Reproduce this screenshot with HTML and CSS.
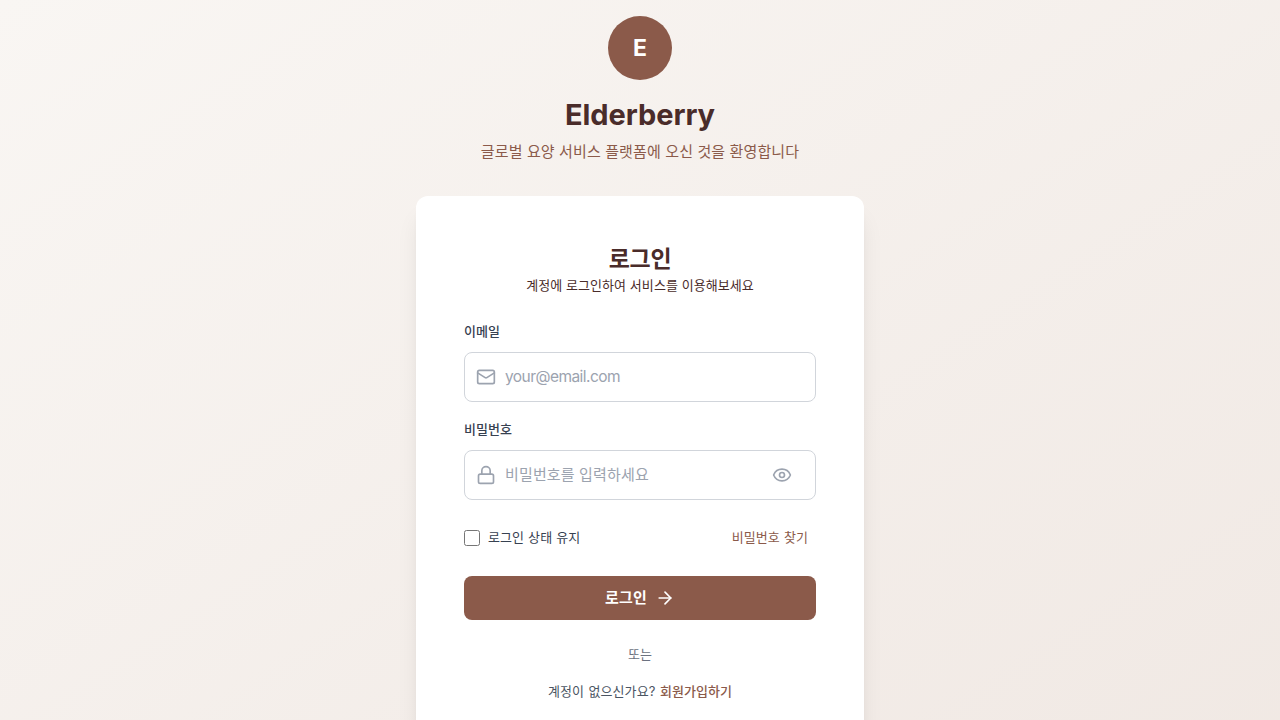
FILE: index.html
```html
<!DOCTYPE html>
<html lang="ko">
<head>
<meta charset="utf-8">
<title>Elderberry</title>
<link rel="stylesheet" href="styles.css">
</head>
<body>
<main class="page">
  <div class="column">
    <header class="brand">
      <div class="logo">E</div>
      <h1 class="brand-name">Elderberry</h1>
      <p class="tagline">글로벌 요양 서비스 플랫폼에 오신 것을 환영합니다</p>
    </header>
    <section class="card">
      <div class="card-head">
        <h2 class="card-title">로그인</h2>
        <p class="card-desc">계정에 로그인하여 서비스를 이용해보세요</p>
      </div>
      <form class="form">
        <div class="field">
          <label class="label" for="email">이메일</label>
          <div class="control">
            <svg class="icon" viewBox="0 0 24 24"><rect x="2" y="4" width="20" height="16" rx="2"/><path d="m22 7-8.97 5.7a1.94 1.94 0 0 1-2.06 0L2 7"/></svg>
            <input class="input input-latin" id="email" type="email" placeholder="your@email.com">
          </div>
        </div>
        <div class="field">
          <label class="label" for="password">비밀번호</label>
          <div class="control">
            <svg class="icon" viewBox="0 0 24 24"><rect x="3" y="11" width="18" height="11" rx="2"/><path d="M7 11V7a5 5 0 0 1 10 0v4"/></svg>
            <input class="input" id="password" type="password" placeholder="비밀번호를 입력하세요">
            <svg class="icon" viewBox="0 0 24 24"><path d="M2.062 12.348a1 1 0 0 1 0-.696 10.75 10.75 0 0 1 19.876 0 1 1 0 0 1 0 .696 10.75 10.75 0 0 1-19.876 0"/><circle cx="12" cy="12" r="3"/></svg>
          </div>
        </div>
        <div class="options">
          <label class="remember"><input class="check" type="checkbox"><span class="remember-text">로그인 상태 유지</span></label>
          <a class="forgot">비밀번호 찾기</a>
        </div>
        <button class="submit" type="button"><span>로그인</span><svg class="arrow" viewBox="0 0 24 24"><path d="M5 12h14"/><path d="m12 5 7 7-7 7"/></svg></button>
      </form>
      <p class="or">또는</p>
      <p class="signup">계정이 없으신가요? <a class="signup-link">회원가입하기</a></p>
    </section>
  </div>
</main>
</body>
</html>
```
FILE: styles.css
```css
* { box-sizing: border-box; margin: 0; }
html { overflow: hidden; }
body {
  height: 720px;
  overflow: hidden;
  font-family: Inter, "Noto Sans CJK KR", sans-serif;
  font-size: 13px;
  line-height: 20px;
  letter-spacing: 0.07px;
  color: #4a2c2a;
}
.page {
  height: 830px;
  padding: 16px;
  display: flex;
  justify-content: center;
  background: linear-gradient(to bottom right, #f9f6f3, #f0e8e3);
}
.column { width: 448px; }
.brand {
  display: flex;
  flex-direction: column;
  align-items: center;
  margin-bottom: 32px;
  text-align: center;
}
.logo {
  width: 64px;
  height: 64px;
  border-radius: 50%;
  background: #8b5a4a;
  color: #fff;
  font-size: 23px;
  font-weight: 700;
  display: flex;
  align-items: center;
  justify-content: center;
  margin-bottom: 17px;
}
.brand-name { font-size: 29px; line-height: 36px; font-weight: 700; letter-spacing: -0.06px; margin-bottom: 7px; }
.tagline { font-size: 15px; line-height: 24px; letter-spacing: 0.12px; color: #8b5a4a; }
.card {
  height: 568px;
  padding: 48px;
  background: #fff;
  border-radius: 12px;
  box-shadow: 0 20px 25px -5px rgba(0,0,0,.1), 0 8px 10px -6px rgba(0,0,0,.1);
}
.card-head { text-align: center; margin-bottom: 26px; }
.card-title { font-size: 23px; line-height: 31px; font-weight: 700; letter-spacing: -0.4px; }
.form { display: flex; flex-direction: column; }
.label { display: block; font-weight: 500; color: #374151; margin-bottom: 11px; }
.field { margin-bottom: 17px; }
.control {
  display: flex;
  align-items: center;
  height: 50px;
  padding: 0 23px 0 11px;
  gap: 9px;
  border: 1px solid #d1d5db;
  border-radius: 8px;
}
.icon, .arrow { width: 20px; height: 20px; fill: none; stroke: #9ca3af; stroke-width: 2; stroke-linecap: round; stroke-linejoin: round; flex: none; }
.input { flex: 1; min-width: 0; border: 0; padding: 0; outline: 0; background: none; font: inherit; font-size: 15px; line-height: 24px; letter-spacing: 0.15px; }
.input-latin { font-size: 15.5px; letter-spacing: -0.55px; }
.input::placeholder { color: #9ca3af; opacity: 1; }
.options { display: flex; justify-content: space-between; align-items: center; height: 36px; margin: 3px 0 20px; padding-right: 8px; }
.remember { display: flex; align-items: center; gap: 8px; color: #374151; }
.check { width: 16px; height: 16px; margin: 0; }
.remember-text, .forgot { padding-bottom: 2px; word-spacing: 0.3px; }
.forgot { color: #8b5a4a; }
.submit { display: flex; align-items: center; justify-content: center; gap: 8px; height: 44px; padding: 0 6px; border: 0; border-radius: 8px; background: #8b5a4a; color: #fff; font: inherit; font-size: 15px; letter-spacing: 0.15px; font-weight: 600; }
.arrow { stroke: #fff; }
.or { margin-top: 24px; text-align: center; color: #6b7280; }
.signup { margin-top: 17px; text-align: center; color: #4b5563; word-spacing: 0.8px; }
.signup-link { color: #8b5a4a; font-weight: 500; }
```
